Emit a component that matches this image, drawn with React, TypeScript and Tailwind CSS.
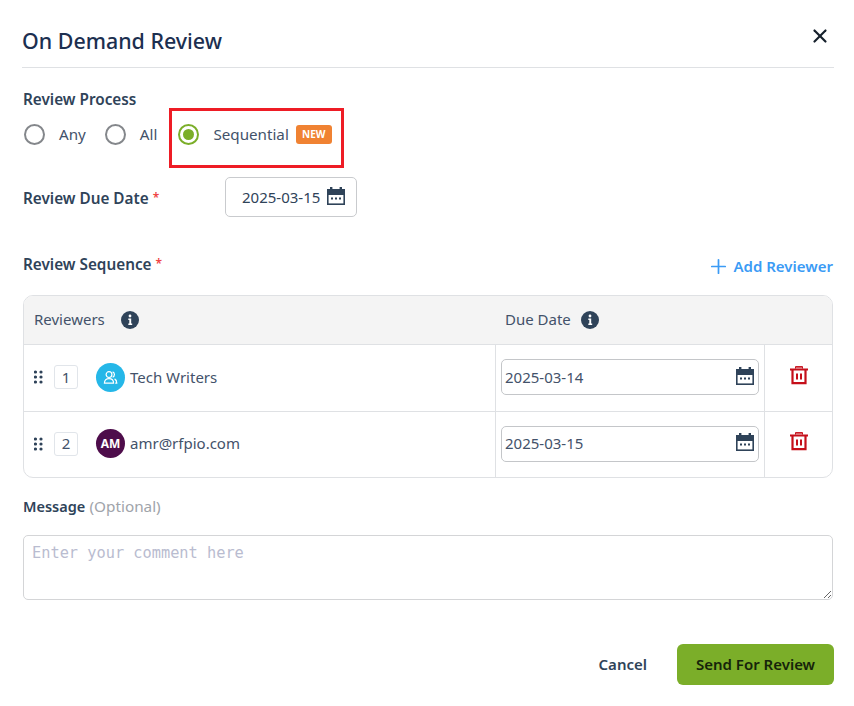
import React from "react";
import { X, Plus } from "lucide-react";

const CalendarIcon = () => (
  <svg width="20" height="20" viewBox="0 0 20 20" className="mb-[3px] shrink-0">
    <path d="M1 3h18v16H1z" fill="#2f4359" />
    <rect x="4" y="1" width="2.4" height="4" fill="#2f4359" />
    <rect x="13.6" y="1" width="2.4" height="4" fill="#2f4359" />
    <rect x="2.6" y="9" width="14.8" height="8.4" fill="#fff" />
    <rect x="5" y="11.5" width="2" height="2" fill="#2f4359" />
    <rect x="9" y="11.5" width="2" height="2" fill="#2f4359" />
    <rect x="13" y="11.5" width="2" height="2" fill="#2f4359" />
  </svg>
);

const TrashIcon = () => (
  <svg width="20" height="20" viewBox="0 0 20 20" className="mb-[7px]">
    <path d="M1 4.5h18" stroke="#c50f1a" strokeWidth="1.8" />
    <path d="M6.5 3.6V1.6h7v2" fill="#d9656c" stroke="#c50f1a" strokeWidth="1" />
    <path d="M3.5 5v13.2h13V5" fill="none" stroke="#c50f1a" strokeWidth="2.2" />
    <rect x="7" y="8.5" width="2" height="6" fill="#c50f1a" />
    <rect x="11" y="8.5" width="2" height="6" fill="#c50f1a" />
  </svg>
);

const InfoIcon = () => (
  <svg width="18" height="18" viewBox="0 0 18 18">
    <circle cx="9" cy="9" r="9" fill="#2f4359" />
    <circle cx="9" cy="5" r="1.4" fill="#fff" />
    <path d="M7.3 7.6h2.9v5h1v1.3H7.3v-1.3h1v-3.7h-1z" fill="#fff" />
  </svg>
);

const GripIcon = () => (
  <svg width="9" height="14" viewBox="0 0 9 14" fill="#2f4359">
    {[1.5, 7].map((x) => [2, 7, 12].map((y) => <circle key={`${x}-${y}`} cx={x} cy={y} r="1.6" />))}
  </svg>
);

const UsersIcon = () => (
  <svg width="15" height="15" viewBox="0 0 15 15" fill="none" stroke="#fff" strokeWidth="1.2">
    <circle cx="6" cy="4.6" r="2.9" />
    <path d="M1.4 13.2c0-3 2-4.6 4.6-4.6s4.6 1.6 4.6 4.6z" />
    <path d="M9.6 1.9a2.9 2.9 0 0 1 0 5.4M11.6 8.9c1.4.7 2.2 2.2 2.2 4.3h-1.6" />
  </svg>
);

const Radio = ({ label, checked }: { label: string; checked?: boolean }) => (
  <div className="flex items-center">
    <span
      className={`flex h-[21px] w-[21px] items-center justify-center rounded-full border-2 ${
        checked ? "border-[#7bae29]" : "border-[#84878b]"
      }`}
    >
      {checked && <span className="h-[11px] w-[11px] rounded-full bg-[#7bae29]" />}
    </span>
    <span className="mb-[2px] ml-[14px] text-[15.2px] leading-5 text-[#43526a]">{label}</span>
  </div>
);

const reviewers = [
  { n: 1, name: "Tech Writers", date: "2025-03-14", team: true },
  { n: 2, name: "amr@rfpio.com", date: "2025-03-15", team: false },
];

export default function App() {
  return (
    <div className="relative h-[706px] w-[854px] bg-white pl-[23px] pr-5 font-['Noto_Sans',sans-serif] text-[#2f4359]">
      {/* header */}
      <div className="-ml-px flex h-[68px] items-center justify-between border-b border-[#dfe1e4] pt-[15px]">
        <h1 className="text-[21.4px] font-medium text-[#1c2f50]">On Demand Review</h1>
        <X size={22} strokeWidth={2.4} className="mb-[10px] mr-[3px] text-[#16202c]" />
      </div>

      <div className="mt-[21px] text-[15.3px] font-semibold leading-5">Review Process</div>
      <div className="relative mt-[15px] flex h-[21px] items-center">
        <div className="ml-px">
          <Radio label="Any" />
        </div>
        <div className="ml-[19px]">
          <Radio label="All" />
        </div>
        <div className="ml-[21px]">
          <Radio label="Sequential" checked />
        </div>
        <span className="ml-[7px] flex h-[19px] w-9 items-center justify-center rounded-[3px] bg-[#f08232] text-[10px] font-bold text-white">
          NEW
        </span>
        {/* highlight box drawn on top of the screenshot */}
        <div className="absolute left-[146px] top-[-16px] h-[60px] w-[175px] border-[3px] border-[#ee1c25]" />
      </div>

      <div className="mt-[32px] flex h-10 items-center">
        <div className="mt-[2px] w-[202px] text-[15.3px] font-semibold leading-5">
          Review Due Date <span className="align-[2px] text-[12px] text-[#ef4444]">*</span>
        </div>
        <div className="flex h-10 w-[132px] items-center gap-[6px] rounded-[5px] border border-[#c9cbce] pl-4 text-[15px]">
          2025-03-15
          <CalendarIcon />
        </div>
      </div>

      <div className="mt-[35px] flex h-5 items-center justify-between">
        <div className="mt-[3px] text-[15.3px] font-semibold leading-5">
          Review Sequence <span className="align-[2px] text-[12px] text-[#ef4444]">*</span>
        </div>
        <div className="mr-px mt-[8px] flex items-center gap-[3px] text-[15px] font-semibold text-[#3b9bf5]">
          <Plus size={23} strokeWidth={1.8} />
          Add Reviewer
        </div>
      </div>

      {/* reviewers table */}
      <div className="mt-[23px] w-[810px] overflow-hidden rounded-[10px] border border-[#dfe1e4]">
        <div className="flex h-[49px] items-center border-b border-[#dfe1e4] bg-[#f4f4f4] text-[15px] text-[#43526a]">
          <div className="flex w-[471px] items-center pl-[10px]">
            <span className="mb-[2px]">Reviewers</span>
            <span className="mb-px ml-4 flex">
              <InfoIcon />
            </span>
          </div>
          <div className="flex items-center pl-[10px]">
            <span className="mb-[2px]">Due Date</span>
            <span className="mb-px ml-[10px] flex">
              <InfoIcon />
            </span>
          </div>
        </div>
        {reviewers.map((r, i) => (
          <div key={r.n} className={`flex h-[66px] ${i > 0 ? "border-t border-[#dfe1e4]" : ""}`}>
            <div className="flex w-[471px] items-center pb-[2px] pl-[10px]">
              <GripIcon />
              <span className="ml-[11px] flex h-6 w-6 items-center justify-center rounded-[3px] border border-[#e1e5ea] text-[15px] text-[#43526a]">
                {r.n}
              </span>
              {r.team ? (
                <span className="ml-[18px] flex h-[29px] w-[29px] items-center justify-center rounded-full bg-[#25b7e8]">
                  <UsersIcon />
                </span>
              ) : (
                <span className="ml-[18px] flex h-[29px] w-[29px] items-center justify-center rounded-full bg-[#4e0d4b] text-[12px] font-bold text-white">
                  AM
                </span>
              )}
              <span className="ml-[5px] text-[15px] text-[#43526a]">{r.name}</span>
            </div>
            <div className="flex w-[270px] items-center border-x border-[#dfe1e4] pl-[5px]">
              <div className="mb-[2px] flex h-9 w-[258px] items-center justify-between rounded-[5px] border border-[#c4c6c9] pl-[3px] pr-[3px] text-[15px] text-[#43526a]">
                {r.date}
                <CalendarIcon />
              </div>
            </div>
            <div className="flex flex-1 items-center justify-center">
              <TrashIcon />
            </div>
          </div>
        ))}
      </div>

      <div className="mt-[18px] leading-5">
        <span className="text-[14.5px] font-semibold">Message</span>{" "}
        <span className="text-[15.3px] text-[#a0a4aa]">(Optional)</span>
      </div>
      <textarea
        placeholder="Enter your comment here"
        className="mt-[19px] block h-[65px] w-[810px] rounded-[5px] border border-[#d4d5d7] px-2 py-[7px] font-['DejaVu_Sans_Mono',monospace] text-[15.3px] leading-5 outline-none placeholder:text-[#b9bcd0]"
      />

      <div className="mt-[44px] flex items-center justify-end">
        <span className="text-[15px] font-semibold">Cancel</span>
        <button className="ml-[30px] h-[41px] w-[157px] rounded-[6px] bg-[#7bae29] text-[15px] font-semibold text-[#16240a]">
          Send For Review
        </button>
      </div>
    </div>
  );
}
